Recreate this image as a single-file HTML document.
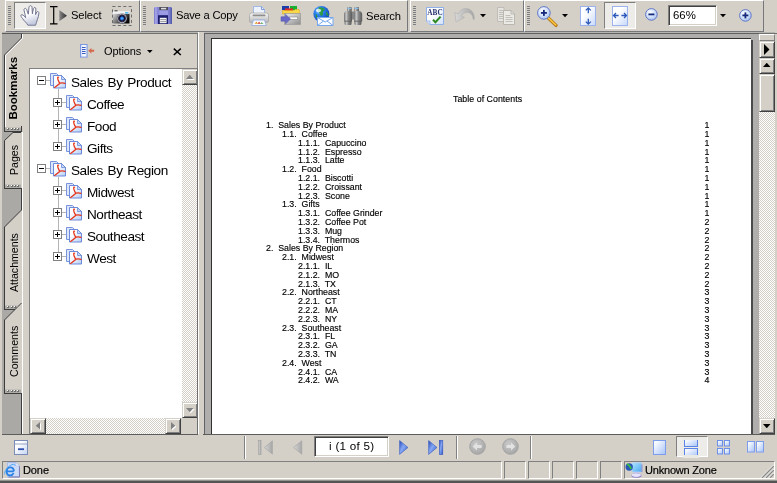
<!DOCTYPE html>
<html><head><meta charset="utf-8"><title>Table of Contents</title>
<style>
*{box-sizing:border-box;margin:0;padding:0}
html,body{width:777px;height:483px;overflow:hidden;background:#d4d0c8;font-family:"Liberation Sans",sans-serif;color:#000}
.a{position:absolute}
.t11{position:absolute;font-size:11px;line-height:13px;white-space:pre;letter-spacing:-0.1px}
.grip{position:absolute;width:3px;height:19px;background:repeating-linear-gradient(#8a8780 0 1px,#e6e3dc 1px 2px)}
.vsep{position:absolute;width:2px;border-left:1px solid #808080;border-right:1px solid #fff}
.pressed{position:absolute;background:#eeece8;border:1px solid;border-color:#808080 #fff #fff #808080}
.btn{position:absolute;background:#d4d0c8;border:1px solid;border-color:#d4d0c8 #404040 #404040 #d4d0c8;box-shadow:inset 1px 1px 0 #fff,inset -1px -1px 0 #808080}
.track{position:absolute;background:repeating-conic-gradient(#fff 0 25%,#d4d0c8 0 50%) 0 0/2px 2px}
svg{position:absolute;overflow:visible}
.toc{position:absolute;font-size:8.8px;line-height:10px;white-space:pre;color:#000;-webkit-text-stroke:0.15px #000}
.tree{position:absolute;font-size:13.6px;line-height:16px;white-space:pre;letter-spacing:-0.45px;word-spacing:1.5px}
.toc,.t11,.tree{will-change:transform}
</style></head><body>
<!-- TOP TOOLBAR -->
<div class="a" style="left:5px;top:0;width:135px;height:32px;border-left:1px solid #fff;border-right:1px solid #75777a;border-top:1px solid #fff;border-bottom:1px solid #75777a"></div>
<div class="a" style="left:140px;top:0;width:268px;height:32px;border-left:1px solid #fff;border-right:1px solid #75777a;border-top:1px solid #fff;border-bottom:1px solid #75777a"></div>
<div class="a" style="left:410px;top:0;width:114px;height:32px;border-left:1px solid #fff;border-right:1px solid #75777a;border-top:1px solid #fff;border-bottom:1px solid #75777a"></div>
<div class="a" style="left:524px;top:0;width:240px;height:32px;border-left:1px solid #fff;border-right:1px solid #75777a;border-top:1px solid #fff;border-bottom:1px solid #75777a"></div>
<svg style="left:8px;top:0" width="4" height="31" shape-rendering="crispEdges"><rect x="0" y="6" width="3" height="1" fill="#7c7e82"/><rect x="0" y="8" width="3" height="1" fill="#7c7e82"/><rect x="0" y="10" width="3" height="1" fill="#7c7e82"/><rect x="0" y="12" width="3" height="1" fill="#7c7e82"/><rect x="0" y="14" width="3" height="1" fill="#7c7e82"/><rect x="0" y="16" width="3" height="1" fill="#7c7e82"/><rect x="0" y="18" width="3" height="1" fill="#7c7e82"/><rect x="0" y="20" width="3" height="1" fill="#7c7e82"/><rect x="0" y="22" width="3" height="1" fill="#7c7e82"/><rect x="0" y="24" width="3" height="1" fill="#7c7e82"/></svg>
<svg style="left:143px;top:0" width="4" height="31" shape-rendering="crispEdges"><rect x="0" y="6" width="3" height="1" fill="#7c7e82"/><rect x="0" y="8" width="3" height="1" fill="#7c7e82"/><rect x="0" y="10" width="3" height="1" fill="#7c7e82"/><rect x="0" y="12" width="3" height="1" fill="#7c7e82"/><rect x="0" y="14" width="3" height="1" fill="#7c7e82"/><rect x="0" y="16" width="3" height="1" fill="#7c7e82"/><rect x="0" y="18" width="3" height="1" fill="#7c7e82"/><rect x="0" y="20" width="3" height="1" fill="#7c7e82"/><rect x="0" y="22" width="3" height="1" fill="#7c7e82"/><rect x="0" y="24" width="3" height="1" fill="#7c7e82"/></svg>
<svg style="left:413px;top:0" width="4" height="31" shape-rendering="crispEdges"><rect x="0" y="6" width="3" height="1" fill="#7c7e82"/><rect x="0" y="8" width="3" height="1" fill="#7c7e82"/><rect x="0" y="10" width="3" height="1" fill="#7c7e82"/><rect x="0" y="12" width="3" height="1" fill="#7c7e82"/><rect x="0" y="14" width="3" height="1" fill="#7c7e82"/><rect x="0" y="16" width="3" height="1" fill="#7c7e82"/><rect x="0" y="18" width="3" height="1" fill="#7c7e82"/><rect x="0" y="20" width="3" height="1" fill="#7c7e82"/><rect x="0" y="22" width="3" height="1" fill="#7c7e82"/><rect x="0" y="24" width="3" height="1" fill="#7c7e82"/></svg>
<svg style="left:527px;top:0" width="4" height="31" shape-rendering="crispEdges"><rect x="0" y="6" width="3" height="1" fill="#7c7e82"/><rect x="0" y="8" width="3" height="1" fill="#7c7e82"/><rect x="0" y="10" width="3" height="1" fill="#7c7e82"/><rect x="0" y="12" width="3" height="1" fill="#7c7e82"/><rect x="0" y="14" width="3" height="1" fill="#7c7e82"/><rect x="0" y="16" width="3" height="1" fill="#7c7e82"/><rect x="0" y="18" width="3" height="1" fill="#7c7e82"/><rect x="0" y="20" width="3" height="1" fill="#7c7e82"/><rect x="0" y="22" width="3" height="1" fill="#7c7e82"/><rect x="0" y="24" width="3" height="1" fill="#7c7e82"/></svg>
<div class="a" style="left:2px;top:32px;width:773px;height:1px;background:#b7b5af"></div>
<div class="a" style="left:2px;top:33px;width:773px;height:1px;background:#5a5c5e"></div>
<div class="pressed" style="left:14px;top:2px;width:32px;height:27px"></div>
<svg style="left:14px;top:2px" width="32" height="28" viewBox="0 0 32 28"><defs><linearGradient id="hg" x1="0" y1="0" x2="0.3" y2="1"><stop offset="0.5" stop-color="#fff"/><stop offset="1" stop-color="#c6cce0"/></linearGradient></defs><path d="M13.9 23.2 C12.5 20.5 10 19 8.6 16.6 C7.4 15 6.4 13.6 7.2 12.9 C8.2 12.2 10 13.6 11.6 15.6 C11.4 13 10.4 10.4 10 8.2 C9.8 6.4 11.6 5.6 12.6 7.4 C13.2 9 13.8 10.6 14.3 12.2 C14.6 9.8 14.7 7.4 15 5.2 C15.3 3.2 17.8 3.2 18 5.2 C18.2 7.4 18.2 9.6 18.4 11.8 C18.8 10 19 8.2 19.4 6.6 C19.9 5 22 5.2 21.9 7 C21.8 8.8 21.6 10.8 21.6 12.6 C22 11.6 22.4 10.6 22.9 10 C23.6 9 25.2 9.6 24.9 11.2 C24.6 13.4 24.2 15.6 23.4 17.6 C22.8 19.6 22 21.2 21.6 23.2Z" fill="url(#hg)" stroke="#70748e" stroke-width="1" stroke-linejoin="round"/></svg>
<svg style="left:50px;top:6px" width="18" height="19" viewBox="0 0 18 19"><path d="M0 0.7H3L3.7 1.3 L4.4 0.7H7.5 M0 17.8H3L3.7 17.2L4.4 17.8H7.5 M3.7 1V17.5" stroke="#000" stroke-width="1.2" fill="none"/><defs><linearGradient id="ag" x1="0" y1="0" x2="1" y2="0"><stop offset="0" stop-color="#8a8a8a"/><stop offset="1" stop-color="#2a2a2a"/></linearGradient></defs><path d="M9.3 4 L17 9.8 L9.3 15.2Z" fill="url(#ag)"/></svg>
<div class="t11" style="left:71px;top:8.5px;font-size:11.2px">Select</div>
<svg style="left:112px;top:6px" width="20" height="20" viewBox="0 0 20 20"><defs><linearGradient id="cg" x1="0" y1="0" x2="1" y2="0.6"><stop offset="0" stop-color="#e8e8e8"/><stop offset="0.35" stop-color="#9a9a9a"/><stop offset="1" stop-color="#050505"/></linearGradient><radialGradient id="lg"><stop offset="0" stop-color="#60b8ff"/><stop offset="0.3" stop-color="#2070e0"/><stop offset="0.48" stop-color="#101030"/><stop offset="0.7" stop-color="#34344a"/><stop offset="0.86" stop-color="#b4b4c4"/><stop offset="1" stop-color="#606070"/></radialGradient></defs><rect x="0.5" y="0.5" width="19" height="19" fill="none" stroke="#6c6c6c" stroke-dasharray="3 2.4"/><path d="M1 7.5 h3 l0.5 -1.5 h3 l0.5 1.5 H17.5 V17.5 H1Z" fill="url(#cg)"/><rect x="1" y="5.2" width="16.5" height="2.6" fill="#f4f4f6"/><rect x="13" y="6" width="3.5" height="1.6" fill="#58b8f0"/><rect x="2.5" y="4.2" width="3" height="1.2" fill="#555"/><circle cx="10" cy="12.4" r="5" fill="url(#lg)"/></svg>
<svg style="left:154px;top:7px" width="18" height="17" viewBox="0 0 18 17"><defs><linearGradient id="fg" x1="0" y1="0" x2="1" y2="0"><stop offset="0" stop-color="#7474c4"/><stop offset="0.1" stop-color="#a8a8ec"/><stop offset="0.2" stop-color="#8686d6"/><stop offset="0.85" stop-color="#7e7ece"/><stop offset="1" stop-color="#4e56a6"/></linearGradient></defs><path d="M1 0 H17 L18 1 V17 H0 V1Z" fill="url(#fg)"/><rect x="5.3" y="3" width="8.7" height="5.4" fill="#9c9ce6"/><rect x="5.3" y="0" width="8.7" height="3.2" fill="#4a4a5a"/><rect x="7" y="0.8" width="5.2" height="1.6" fill="#dcdcdc"/><rect x="4" y="8.2" width="10" height="8.8" fill="#1e1e6e"/><rect x="5.8" y="10.8" width="6.8" height="5.4" fill="#f4f4f4"/><path d="M6.2 12.6h6M6.2 14.6h6" stroke="#909090" stroke-width="0.9"/></svg>
<div class="t11" style="left:176px;top:8.5px;font-size:11.2px;letter-spacing:-0.22px">Save a Copy</div>
<svg style="left:249px;top:6px" width="20" height="20" viewBox="0 0 20 20"><defs><linearGradient id="pr" x1="0" y1="0" x2="0" y2="1"><stop offset="0" stop-color="#fafafa"/><stop offset="1" stop-color="#b4b4b4"/></linearGradient></defs><path d="M4.5 0.5 H12.5 L15.5 3.5 V8 H4.5Z" fill="#eef2fc" stroke="#9db4e4" stroke-width="0.9"/><path d="M12.5 0.5V3.5H15.5" fill="none" stroke="#6f93dc" stroke-width="0.9"/><path d="M2.5 7 H17.5 Q19.5 7 19.5 9.5 V15 Q19.5 16.5 18 16.5 H2 Q0.5 16.5 0.5 15 V9.5 Q0.5 7 2.5 7Z" fill="url(#pr)" stroke="#a8a8a8" stroke-width="0.8"/><rect x="3.5" y="8.6" width="13" height="1.6" rx="0.8" fill="#8e8e8e"/><path d="M4.5 14 H15.5 L17.3 19.5 H2.7Z" fill="#f6f8ff" stroke="#8fa8dc" stroke-width="0.8"/><path d="M5.5 17.8 l2 -2.4 l1.5 2.4z" fill="#e8a020"/><path d="M8.5 17.8 l1.5 -2 l2 2z" fill="#d83a2a"/><path d="M11.5 17.8 l1 -1.6 l2 1.6z" fill="#3aa040"/></svg>
<svg style="left:281px;top:6px" width="20" height="19" viewBox="0 0 20 19"><defs><linearGradient id="og" x1="0" y1="0" x2="1" y2="1"><stop offset="0" stop-color="#f0f0f0"/><stop offset="1" stop-color="#8c8c8c"/></linearGradient></defs><rect x="1" y="0" width="7" height="4" fill="#1c3ea8"/><rect x="9" y="0" width="7" height="4" fill="#18b030"/><rect x="4" y="2.4" width="8" height="3.5" fill="#e02828"/><path d="M1.5 4.5 H13 l1 -1 h4 l0.5 1 V8 H1.5Z" fill="#f8d848" stroke="#e0a818" stroke-width="0.9" stroke-dasharray="1 0.6"/><rect x="3.5" y="7.5" width="16" height="11" fill="url(#og)" stroke="#9a9a9a" stroke-width="0.7"/><rect x="8.5" y="11" width="8" height="2.4" fill="#fff" stroke="#8a8a8a" stroke-width="0.6"/><path d="M0 10.8 H4.5 V8.2 L9.5 13 L4.5 17.8 V15.2 H0Z" fill="#6868c8" stroke="#5050a8" stroke-width="0.5"/></svg>
<svg style="left:313px;top:6px" width="21" height="20" viewBox="0 0 21 20"><defs><radialGradient id="gg" cx="0.35" cy="0.3" r="0.8"><stop offset="0" stop-color="#bfe0ff"/><stop offset="0.3" stop-color="#2e86f0"/><stop offset="1" stop-color="#0c3cb0"/></radialGradient></defs><circle cx="8.4" cy="8" r="8" fill="url(#gg)"/><path d="M6 1.5 C8 1 11 2 12 3.5 C11 5 9.5 5 10 7 C10.5 8.5 9 10.5 7.5 9.5 C6 8.5 7 6.5 5.5 5.5 C4.5 4.5 5 2.5 6 1.5Z M13 5.5 C14.5 6 15.5 8 15.5 10 C14.5 10.5 13 9 13 7.5Z M3 8 C4 9 5 10.5 4.5 12.5 C3 12 2 10 3 8Z" fill="#2c9a38" opacity="0.9"/><ellipse cx="5.5" cy="4.5" rx="2.6" ry="1.8" fill="#fff" opacity="0.75"/><rect x="4.5" y="11.5" width="15.5" height="8" fill="#fafcff" stroke="#78a8ec" stroke-width="1"/><path d="M4.5 11.5 L12.2 16 L20 11.5 M4.5 19.5 L10.5 15 M20 19.5 L14 15" fill="none" stroke="#78a8ec" stroke-width="1"/></svg>
<svg style="left:343px;top:7px" width="20" height="18" viewBox="0 0 20 18"><defs><linearGradient id="bg" x1="0" y1="0" x2="1" y2="0"><stop offset="0" stop-color="#707070"/><stop offset="0.28" stop-color="#c8c8c8"/><stop offset="0.55" stop-color="#8a8a8a"/><stop offset="1" stop-color="#5a5a5a"/></linearGradient></defs><rect x="8.2" y="4.5" width="3.6" height="8" fill="#868686"/><rect x="4" y="0" width="4.7" height="5" rx="1" fill="url(#bg)"/><rect x="11.3" y="0" width="4.7" height="5" rx="1" fill="url(#bg)"/><path d="M1 7.5 Q1 4.6 3.6 4 H8 Q9 4.6 9 7 V14.4 H1Z" fill="url(#bg)"/><path d="M11 7 Q11 4.6 12 4 H16.4 Q19.2 4.6 19.2 7.5 V14.4 H11Z" fill="url(#bg)"/><rect x="1.6" y="14" width="6.9" height="4" rx="1.2" fill="url(#bg)"/><rect x="11.5" y="14" width="6.9" height="4" rx="1.2" fill="url(#bg)"/><path d="M1.4 14.2H8.8M11.2 14.2H18.8" stroke="#5c5c5c" stroke-width="0.8"/><rect x="4.4" y="0.8" width="3.9" height="1.1" fill="#84c4f2"/><rect x="11.7" y="0.8" width="3.9" height="1.1" fill="#84c4f2"/></svg>
<div class="t11" style="left:366px;top:10px;font-size:11.2px;letter-spacing:-0.08px">Search</div>
<svg style="left:426px;top:7px;will-change:transform" width="18" height="18" viewBox="0 0 18 18"><defs><linearGradient id="ab" x1="0" y1="0" x2="1" y2="1"><stop offset="0.4" stop-color="#fff"/><stop offset="1" stop-color="#cfe0f8"/></linearGradient></defs><path d="M0.5 0.5 H17.5 V17.5 H4 L0.5 14Z" fill="url(#ab)" stroke="#8fb0e8" stroke-width="1"/><path d="M0.5 14 H4 V17.5" fill="#dce8fa" stroke="#8fb0e8" stroke-width="0.8"/><text x="1.3" y="8.2" font-family="'Liberation Serif',serif" font-weight="bold" font-size="7.6" fill="#22306e" textLength="15.4" lengthAdjust="spacingAndGlyphs">ABC</text><path d="M7 12.8 L9.4 15.2 L14.6 9.6" fill="none" stroke="#2e8a1e" stroke-width="2"/></svg>
<svg style="left:454px;top:8px" width="21" height="15" viewBox="0 0 21 15"><defs><linearGradient id="ug" x1="0" y1="0" x2="1" y2="0"><stop offset="0" stop-color="#d8d8d8"/><stop offset="1" stop-color="#a4a4a4"/></linearGradient></defs><path d="M0.8 4.5 L2 14 L10.5 9.5 L7.4 7.8 C9.5 4.2 14.5 3.2 17.2 6.2 C18.5 7.8 19 9.2 19 11.2 L20.3 11.2 C20.6 6.5 18.6 2.2 14.2 0.8 C10 -0.3 6 1.8 4.1 5.9Z" fill="url(#ug)" stroke="#b0b0b0" stroke-width="0.6"/></svg>
<svg style="left:480px;top:14px" width="6" height="4"><path d="M0 0H6L3 3.2Z" fill="#000"/></svg>
<svg style="left:497px;top:7px" width="18" height="18" viewBox="0 0 18 18"><path d="M0.5 0.5 H7 V14.5 H0.5Z" fill="#e6e4de" stroke="#bcbab4" stroke-width="0.9"/><path d="M2 3.5h4M2 5.5h4M2 7.5h4M2 9.5h4M2 11.5h4" stroke="#bcbab4" stroke-width="0.9"/><path d="M6.5 3.5 H14 L17.5 7 V17.5 H6.5Z" fill="#eceae4" stroke="#b4b2ac" stroke-width="0.9"/><path d="M14 3.5 V7 H17.5" fill="none" stroke="#b4b2ac" stroke-width="0.9"/><path d="M8.5 8.5h5M8.5 10.5h7M8.5 12.5h7M8.5 14.5h7" stroke="#bcbab4" stroke-width="0.9"/></svg>
<svg style="left:546px;top:16px" width="12" height="11" viewBox="0 0 12 11"><path d="M1.5 1.2 L10 9.4" stroke="#b87818" stroke-width="3.4" stroke-linecap="round"/><path d="M1.8 1.3 L9.8 9" stroke="#f8c840" stroke-width="1.6" stroke-linecap="round"/></svg>
<svg style="left:536.8px;top:5.5px" width="13.8" height="13.8" viewBox="0 0 13.8 13.8"><defs><radialGradient id="z1" cx="0.4" cy="0.35" r="0.7"><stop offset="0" stop-color="#fff"/><stop offset="0.5" stop-color="#d6e4fa"/><stop offset="1" stop-color="#a2bef0"/></radialGradient></defs><circle cx="6.9" cy="6.9" r="6.3" fill="url(#z1)" stroke="#6074c4" stroke-width="1"/><path d="M3.9 6.9H9.9" stroke="#14287c" stroke-width="1.8"/><path d="M6.9 3.9V9.9" stroke="#14287c" stroke-width="1.8"/></svg>
<svg style="left:562px;top:14px" width="6" height="4"><path d="M0 0H6L3 3.2Z" fill="#000"/></svg>
<svg style="left:580px;top:6px" width="16" height="20" viewBox="0 0 16 20"><defs><linearGradient id="fp" x1="0" y1="0" x2="1" y2="1"><stop offset="0.35" stop-color="#fff"/><stop offset="1" stop-color="#c6d8f8"/></linearGradient></defs><rect x="0.5" y="0.5" width="15.0" height="19.0" fill="url(#fp)" stroke="#98b0ee" stroke-width="0.95"/><path d="M8.3 2 V7.2 M5.8 4.4 L8.3 1.9 L10.8 4.4 M8.3 12.8 V18 M5.8 15.6 L8.3 18.1 L10.8 15.6" fill="none" stroke="#2c58b8" stroke-width="1.3"/></svg>
<div class="pressed" style="left:604px;top:2px;width:32px;height:27px"></div>
<svg style="left:612px;top:6px" width="16" height="20" viewBox="0 0 16 20"><defs><linearGradient id="fw" x1="0" y1="0" x2="1" y2="1"><stop offset="0.35" stop-color="#fff"/><stop offset="1" stop-color="#c6d8f8"/></linearGradient></defs><rect x="0.5" y="0.5" width="15.0" height="19.0" fill="url(#fw)" stroke="#98b0ee" stroke-width="0.95"/><path d="M1.6 9.5 H6.6 M4 7 L1.5 9.5 L4 12 M9.4 9.5 H14.4 M12 7 L14.5 9.5 L12 12" fill="none" stroke="#2c58b8" stroke-width="1.3"/></svg>
<svg style="left:645.4px;top:8.0px" width="12.8" height="12.8" viewBox="0 0 12.8 12.8"><defs><radialGradient id="z2" cx="0.4" cy="0.35" r="0.7"><stop offset="0" stop-color="#fff"/><stop offset="0.5" stop-color="#d6e4fa"/><stop offset="1" stop-color="#a2bef0"/></radialGradient></defs><circle cx="6.4" cy="6.4" r="5.8" fill="url(#z2)" stroke="#6074c4" stroke-width="1"/><path d="M3.4 6.4H9.4" stroke="#14287c" stroke-width="1.8"/></svg>
<div class="a" style="left:668px;top:5px;width:49px;height:21px;background:#fff;border:1px solid;border-color:#808080 #fff #fff #808080;box-shadow:inset 1px 1px 0 #404040,inset -1px -1px 0 #d4d0c8"></div>
<div class="t11" style="left:673px;top:8.5px;font-size:11.4px;letter-spacing:0">66%</div>
<svg style="left:720px;top:14px" width="6" height="4"><path d="M0 0H6L3 3.2Z" fill="#000"/></svg>
<svg style="left:739.3px;top:8.5px" width="12.8" height="12.8" viewBox="0 0 12.8 12.8"><defs><radialGradient id="z3" cx="0.4" cy="0.35" r="0.7"><stop offset="0" stop-color="#fff"/><stop offset="0.5" stop-color="#d6e4fa"/><stop offset="1" stop-color="#a2bef0"/></radialGradient></defs><circle cx="6.4" cy="6.4" r="5.8" fill="url(#z3)" stroke="#6074c4" stroke-width="1"/><path d="M3.4 6.4H9.4" stroke="#14287c" stroke-width="1.8"/><path d="M6.4 3.4V9.4" stroke="#14287c" stroke-width="1.8"/></svg>
<!-- NAV PANEL -->
<svg width="0" height="0" style="left:0;top:0"><defs><linearGradient id="pg" x1="0" y1="0" x2="1" y2="1"><stop offset="0.3" stop-color="#fff"/><stop offset="1" stop-color="#b4ccf4"/></linearGradient></defs></svg>
<div class="a" style="left:23px;top:33px;width:175px;height:401px;background:#d4d0c8;border-top:1px solid #707070;border-right:1px solid #808080"></div>
<div class="a" style="left:198px;top:32px;width:6px;height:403px;background:#d4d0c8;border-left:1px solid #fff"></div>
<svg style="left:80px;top:44px" width="15" height="14" viewBox="0 0 15 14"><defs><linearGradient id="oi" x1="0" y1="0" x2="1" y2="0"><stop offset="0" stop-color="#c8d6f8"/><stop offset="0.5" stop-color="#fff"/><stop offset="1" stop-color="#dce6fa"/></linearGradient></defs><rect x="0.5" y="0.5" width="6.6" height="12.6" fill="url(#oi)" stroke="#7c98e0"/><path d="M2 3.5h3.6M2 5.5h3.6M2 7.5h3.6M2 9.5h3.6" stroke="#3a5cc0" stroke-width="1"/><path d="M8.2 6.7 L11.4 4 V5.7 H14.2 V7.7 H11.4 V9.4z" fill="#d4684a"/></svg>
<div class="t11" style="left:104px;top:45px;letter-spacing:-0.1px">Options</div>
<svg style="left:147px;top:50px" width="6" height="4"><path d="M0 0h5.6L2.8 3z" fill="#000"/></svg>
<svg style="left:173px;top:48px" width="9" height="8" viewBox="0 0 9 8"><path d="M0.8 0.6 L7.8 7 M7.8 0.6 L0.8 7" stroke="#000" stroke-width="1.45"/></svg>
<div class="a" style="left:29px;top:68px;width:169px;height:366px;background:#fff;border-left:1px solid #808080;border-top:1px solid #808080"></div>
<div class="a" style="left:58px;top:89px;width:1px;height:59px;background:#b4b4b4"></div>
<div class="a" style="left:58px;top:177px;width:1px;height:81px;background:#b4b4b4"></div>
<div class="a" style="left:46px;top:80px;width:4px;height:1px;background:#b4b4b4"></div>
<div class="a" style="left:37px;top:76px;width:9px;height:9px;border:1px solid #808080;background:#fff"></div><div class="a" style="left:39px;top:80px;width:5px;height:1px;background:#000"></div>
<svg style="left:50px;top:72px" width="16" height="17" viewBox="0 0 16 17"><path d="M0.5 1.5h6l2 2v10h-8z" fill="#dce6fa" stroke="#6c88d8" stroke-width="0.9"/><path d="M3.5 3.5h8l4 4v8.5h-12z" fill="url(#pg)" stroke="#5f7fd6" stroke-width="0.9"/><path d="M11.5 3.5v4h4z" fill="#c4d6f6" stroke="#5f7fd6" stroke-width="0.7"/><path d="M8.6 5.2 C7.6 4.6 7.4 6.2 8.2 8.2 C8.8 9.8 9.4 10.6 9.9 11.2 C8.6 12.4 7 13.8 4.6 15.4 M9.9 11.2 C11.2 10.9 13.2 10.8 15 11.4" fill="none" stroke="#e63419" stroke-width="1.25" stroke-linecap="round"/></svg>
<div class="tree" style="left:71px;top:75px">Sales By Product</div>
<div class="a" style="left:62px;top:102px;width:4px;height:1px;background:#b4b4b4"></div>
<div class="a" style="left:53px;top:98px;width:9px;height:9px;border:1px solid #808080;background:#fff"></div><div class="a" style="left:55px;top:102px;width:5px;height:1px;background:#000"></div><div class="a" style="left:57px;top:100px;width:1px;height:5px;background:#000"></div>
<svg style="left:66px;top:94px" width="16" height="17" viewBox="0 0 16 17"><path d="M0.5 1.5h6l2 2v10h-8z" fill="#dce6fa" stroke="#6c88d8" stroke-width="0.9"/><path d="M3.5 3.5h8l4 4v8.5h-12z" fill="url(#pg)" stroke="#5f7fd6" stroke-width="0.9"/><path d="M11.5 3.5v4h4z" fill="#c4d6f6" stroke="#5f7fd6" stroke-width="0.7"/><path d="M8.6 5.2 C7.6 4.6 7.4 6.2 8.2 8.2 C8.8 9.8 9.4 10.6 9.9 11.2 C8.6 12.4 7 13.8 4.6 15.4 M9.9 11.2 C11.2 10.9 13.2 10.8 15 11.4" fill="none" stroke="#e63419" stroke-width="1.25" stroke-linecap="round"/></svg>
<div class="tree" style="left:87px;top:97px">Coffee</div>
<div class="a" style="left:62px;top:124px;width:4px;height:1px;background:#b4b4b4"></div>
<div class="a" style="left:53px;top:120px;width:9px;height:9px;border:1px solid #808080;background:#fff"></div><div class="a" style="left:55px;top:124px;width:5px;height:1px;background:#000"></div><div class="a" style="left:57px;top:122px;width:1px;height:5px;background:#000"></div>
<svg style="left:66px;top:116px" width="16" height="17" viewBox="0 0 16 17"><path d="M0.5 1.5h6l2 2v10h-8z" fill="#dce6fa" stroke="#6c88d8" stroke-width="0.9"/><path d="M3.5 3.5h8l4 4v8.5h-12z" fill="url(#pg)" stroke="#5f7fd6" stroke-width="0.9"/><path d="M11.5 3.5v4h4z" fill="#c4d6f6" stroke="#5f7fd6" stroke-width="0.7"/><path d="M8.6 5.2 C7.6 4.6 7.4 6.2 8.2 8.2 C8.8 9.8 9.4 10.6 9.9 11.2 C8.6 12.4 7 13.8 4.6 15.4 M9.9 11.2 C11.2 10.9 13.2 10.8 15 11.4" fill="none" stroke="#e63419" stroke-width="1.25" stroke-linecap="round"/></svg>
<div class="tree" style="left:87px;top:119px">Food</div>
<div class="a" style="left:62px;top:146px;width:4px;height:1px;background:#b4b4b4"></div>
<div class="a" style="left:53px;top:142px;width:9px;height:9px;border:1px solid #808080;background:#fff"></div><div class="a" style="left:55px;top:146px;width:5px;height:1px;background:#000"></div><div class="a" style="left:57px;top:144px;width:1px;height:5px;background:#000"></div>
<svg style="left:66px;top:138px" width="16" height="17" viewBox="0 0 16 17"><path d="M0.5 1.5h6l2 2v10h-8z" fill="#dce6fa" stroke="#6c88d8" stroke-width="0.9"/><path d="M3.5 3.5h8l4 4v8.5h-12z" fill="url(#pg)" stroke="#5f7fd6" stroke-width="0.9"/><path d="M11.5 3.5v4h4z" fill="#c4d6f6" stroke="#5f7fd6" stroke-width="0.7"/><path d="M8.6 5.2 C7.6 4.6 7.4 6.2 8.2 8.2 C8.8 9.8 9.4 10.6 9.9 11.2 C8.6 12.4 7 13.8 4.6 15.4 M9.9 11.2 C11.2 10.9 13.2 10.8 15 11.4" fill="none" stroke="#e63419" stroke-width="1.25" stroke-linecap="round"/></svg>
<div class="tree" style="left:87px;top:141px">Gifts</div>
<div class="a" style="left:46px;top:168px;width:4px;height:1px;background:#b4b4b4"></div>
<div class="a" style="left:37px;top:164px;width:9px;height:9px;border:1px solid #808080;background:#fff"></div><div class="a" style="left:39px;top:168px;width:5px;height:1px;background:#000"></div>
<svg style="left:50px;top:160px" width="16" height="17" viewBox="0 0 16 17"><path d="M0.5 1.5h6l2 2v10h-8z" fill="#dce6fa" stroke="#6c88d8" stroke-width="0.9"/><path d="M3.5 3.5h8l4 4v8.5h-12z" fill="url(#pg)" stroke="#5f7fd6" stroke-width="0.9"/><path d="M11.5 3.5v4h4z" fill="#c4d6f6" stroke="#5f7fd6" stroke-width="0.7"/><path d="M8.6 5.2 C7.6 4.6 7.4 6.2 8.2 8.2 C8.8 9.8 9.4 10.6 9.9 11.2 C8.6 12.4 7 13.8 4.6 15.4 M9.9 11.2 C11.2 10.9 13.2 10.8 15 11.4" fill="none" stroke="#e63419" stroke-width="1.25" stroke-linecap="round"/></svg>
<div class="tree" style="left:71px;top:163px">Sales By Region</div>
<div class="a" style="left:62px;top:190px;width:4px;height:1px;background:#b4b4b4"></div>
<div class="a" style="left:53px;top:186px;width:9px;height:9px;border:1px solid #808080;background:#fff"></div><div class="a" style="left:55px;top:190px;width:5px;height:1px;background:#000"></div><div class="a" style="left:57px;top:188px;width:1px;height:5px;background:#000"></div>
<svg style="left:66px;top:182px" width="16" height="17" viewBox="0 0 16 17"><path d="M0.5 1.5h6l2 2v10h-8z" fill="#dce6fa" stroke="#6c88d8" stroke-width="0.9"/><path d="M3.5 3.5h8l4 4v8.5h-12z" fill="url(#pg)" stroke="#5f7fd6" stroke-width="0.9"/><path d="M11.5 3.5v4h4z" fill="#c4d6f6" stroke="#5f7fd6" stroke-width="0.7"/><path d="M8.6 5.2 C7.6 4.6 7.4 6.2 8.2 8.2 C8.8 9.8 9.4 10.6 9.9 11.2 C8.6 12.4 7 13.8 4.6 15.4 M9.9 11.2 C11.2 10.9 13.2 10.8 15 11.4" fill="none" stroke="#e63419" stroke-width="1.25" stroke-linecap="round"/></svg>
<div class="tree" style="left:87px;top:185px">Midwest</div>
<div class="a" style="left:62px;top:212px;width:4px;height:1px;background:#b4b4b4"></div>
<div class="a" style="left:53px;top:208px;width:9px;height:9px;border:1px solid #808080;background:#fff"></div><div class="a" style="left:55px;top:212px;width:5px;height:1px;background:#000"></div><div class="a" style="left:57px;top:210px;width:1px;height:5px;background:#000"></div>
<svg style="left:66px;top:204px" width="16" height="17" viewBox="0 0 16 17"><path d="M0.5 1.5h6l2 2v10h-8z" fill="#dce6fa" stroke="#6c88d8" stroke-width="0.9"/><path d="M3.5 3.5h8l4 4v8.5h-12z" fill="url(#pg)" stroke="#5f7fd6" stroke-width="0.9"/><path d="M11.5 3.5v4h4z" fill="#c4d6f6" stroke="#5f7fd6" stroke-width="0.7"/><path d="M8.6 5.2 C7.6 4.6 7.4 6.2 8.2 8.2 C8.8 9.8 9.4 10.6 9.9 11.2 C8.6 12.4 7 13.8 4.6 15.4 M9.9 11.2 C11.2 10.9 13.2 10.8 15 11.4" fill="none" stroke="#e63419" stroke-width="1.25" stroke-linecap="round"/></svg>
<div class="tree" style="left:87px;top:207px">Northeast</div>
<div class="a" style="left:62px;top:234px;width:4px;height:1px;background:#b4b4b4"></div>
<div class="a" style="left:53px;top:230px;width:9px;height:9px;border:1px solid #808080;background:#fff"></div><div class="a" style="left:55px;top:234px;width:5px;height:1px;background:#000"></div><div class="a" style="left:57px;top:232px;width:1px;height:5px;background:#000"></div>
<svg style="left:66px;top:226px" width="16" height="17" viewBox="0 0 16 17"><path d="M0.5 1.5h6l2 2v10h-8z" fill="#dce6fa" stroke="#6c88d8" stroke-width="0.9"/><path d="M3.5 3.5h8l4 4v8.5h-12z" fill="url(#pg)" stroke="#5f7fd6" stroke-width="0.9"/><path d="M11.5 3.5v4h4z" fill="#c4d6f6" stroke="#5f7fd6" stroke-width="0.7"/><path d="M8.6 5.2 C7.6 4.6 7.4 6.2 8.2 8.2 C8.8 9.8 9.4 10.6 9.9 11.2 C8.6 12.4 7 13.8 4.6 15.4 M9.9 11.2 C11.2 10.9 13.2 10.8 15 11.4" fill="none" stroke="#e63419" stroke-width="1.25" stroke-linecap="round"/></svg>
<div class="tree" style="left:87px;top:229px">Southeast</div>
<div class="a" style="left:62px;top:256px;width:4px;height:1px;background:#b4b4b4"></div>
<div class="a" style="left:53px;top:252px;width:9px;height:9px;border:1px solid #808080;background:#fff"></div><div class="a" style="left:55px;top:256px;width:5px;height:1px;background:#000"></div><div class="a" style="left:57px;top:254px;width:1px;height:5px;background:#000"></div>
<svg style="left:66px;top:248px" width="16" height="17" viewBox="0 0 16 17"><path d="M0.5 1.5h6l2 2v10h-8z" fill="#dce6fa" stroke="#6c88d8" stroke-width="0.9"/><path d="M3.5 3.5h8l4 4v8.5h-12z" fill="url(#pg)" stroke="#5f7fd6" stroke-width="0.9"/><path d="M11.5 3.5v4h4z" fill="#c4d6f6" stroke="#5f7fd6" stroke-width="0.7"/><path d="M8.6 5.2 C7.6 4.6 7.4 6.2 8.2 8.2 C8.8 9.8 9.4 10.6 9.9 11.2 C8.6 12.4 7 13.8 4.6 15.4 M9.9 11.2 C11.2 10.9 13.2 10.8 15 11.4" fill="none" stroke="#e63419" stroke-width="1.25" stroke-linecap="round"/></svg>
<div class="tree" style="left:87px;top:251px">West</div>
<div class="track" style="left:182px;top:69px;width:16px;height:349px"></div>
<div class="btn" style="left:182px;top:69px;width:16px;height:16px"></div>
<svg style="left:186px;top:75px" width="8" height="4"><path d="M0 4 L3.5 0 L4 0 L7.5 4Z" fill="#fff" transform="translate(1,1)"/><path d="M0 4 L3.5 0 L4 0 L7.5 4Z" fill="#808080"/></svg>
<div class="btn" style="left:182px;top:402px;width:16px;height:16px"></div>
<svg style="left:186px;top:408px" width="8" height="4"><path d="M0 0 L7.5 0 L4 4 L3.5 4Z" fill="#fff" transform="translate(1,1)"/><path d="M0 0 L7.5 0 L4 4 L3.5 4Z" fill="#808080"/></svg>
<div class="track" style="left:30px;top:418px;width:152px;height:16px"></div>
<div class="btn" style="left:30px;top:418px;width:16px;height:16px"></div>
<svg style="left:36px;top:422px" width="4" height="8"><path d="M4 0 L4 7.5 L0 4 L0 3.5Z" fill="#fff" transform="translate(1,1)"/><path d="M4 0 L4 7.5 L0 4 L0 3.5Z" fill="#808080"/></svg>
<div class="btn" style="left:165px;top:418px;width:16px;height:16px"></div>
<svg style="left:171px;top:422px" width="4" height="8"><path d="M0 0 L0 7.5 L4 4 L4 3.5Z" fill="#fff" transform="translate(1,1)"/><path d="M0 0 L0 7.5 L4 4 L4 3.5Z" fill="#808080"/></svg>
<div class="a" style="left:181px;top:418px;width:17px;height:16px;background:#d4d0c8"></div>
<div class="a" style="left:197px;top:68px;width:1px;height:366px;background:#6e6e6e"></div>
<!-- LEFT TABS -->
<svg style="left:0;top:0;will-change:transform" width="30" height="483" viewBox="0 0 30 483" shape-rendering="crispEdges"><rect x="2" y="34" width="20" height="400" fill="#aba9a6"/><rect x="21" y="126" width="1" height="308" fill="#3c3c3c"/><rect x="22" y="132" width="1" height="302" fill="#fff"/><path d="M21.5 132 H13 L4.5 140.5 V189 H21.5 Z" fill="#d4d0c8"/><path d="M21 132.5 H13 L4.5 140.5 V189" fill="none" stroke="#3c3c3c" shape-rendering="auto"/><rect x="5" y="184" width="16" height="4" fill="#aeaca6"/><rect x="5" y="184" width="16" height="1" fill="#c4c1ba"/><rect x="7" y="185" width="2" height="2" fill="#6e6e6e"/><rect x="7" y="185" width="1" height="1" fill="#fff"/><rect x="11" y="185" width="2" height="2" fill="#6e6e6e"/><rect x="11" y="185" width="1" height="1" fill="#fff"/><rect x="14" y="185" width="2" height="2" fill="#6e6e6e"/><rect x="14" y="185" width="1" height="1" fill="#fff"/><rect x="17" y="185" width="2" height="2" fill="#6e6e6e"/><rect x="17" y="185" width="1" height="1" fill="#fff"/><rect x="4" y="188" width="18" height="1" fill="#3c3c3c"/><path d="M21.5 210 L4.5 227 V310 H21.5Z" fill="#d4d0c8"/><path d="M21.5 210 L4.5 227 V310" fill="none" stroke="#3c3c3c" shape-rendering="auto"/><rect x="5" y="305" width="16" height="4" fill="#aeaca6"/><rect x="5" y="305" width="16" height="1" fill="#c4c1ba"/><rect x="7" y="306" width="2" height="2" fill="#6e6e6e"/><rect x="7" y="306" width="1" height="1" fill="#fff"/><rect x="11" y="306" width="2" height="2" fill="#6e6e6e"/><rect x="11" y="306" width="1" height="1" fill="#fff"/><rect x="14" y="306" width="2" height="2" fill="#6e6e6e"/><rect x="14" y="306" width="1" height="1" fill="#fff"/><rect x="17" y="306" width="2" height="2" fill="#6e6e6e"/><rect x="17" y="306" width="1" height="1" fill="#fff"/><rect x="4" y="309" width="18" height="1" fill="#3c3c3c"/><path d="M21.5 303 L4.5 320 V394 H21.5Z" fill="#d4d0c8"/><path d="M21.5 303 L4.5 320 V394" fill="none" stroke="#3c3c3c" shape-rendering="auto"/><rect x="5" y="389" width="16" height="4" fill="#aeaca6"/><rect x="5" y="389" width="16" height="1" fill="#c4c1ba"/><rect x="7" y="390" width="2" height="2" fill="#6e6e6e"/><rect x="7" y="390" width="1" height="1" fill="#fff"/><rect x="11" y="390" width="2" height="2" fill="#6e6e6e"/><rect x="11" y="390" width="1" height="1" fill="#fff"/><rect x="14" y="390" width="2" height="2" fill="#6e6e6e"/><rect x="14" y="390" width="1" height="1" fill="#fff"/><rect x="17" y="390" width="2" height="2" fill="#6e6e6e"/><rect x="17" y="390" width="1" height="1" fill="#fff"/><rect x="4" y="393" width="18" height="1" fill="#3c3c3c"/><path d="M23 34 H21.5 V38 L4.5 55 V132 H23Z" fill="#d4d0c8"/><path d="M21.5 34 V38 L4.5 55 V131" fill="none" stroke="#3c3c3c" shape-rendering="auto"/><path d="M22.5 34 V38.4 L5.5 55.4 V131" fill="none" stroke="#fff" shape-rendering="auto"/><rect x="5" y="127" width="16" height="4" fill="#aeaca6"/><rect x="5" y="127" width="16" height="1" fill="#c4c1ba"/><rect x="7" y="128" width="2" height="2" fill="#6e6e6e"/><rect x="7" y="128" width="1" height="1" fill="#fff"/><rect x="11" y="128" width="2" height="2" fill="#6e6e6e"/><rect x="11" y="128" width="1" height="1" fill="#fff"/><rect x="14" y="128" width="2" height="2" fill="#6e6e6e"/><rect x="14" y="128" width="1" height="1" fill="#fff"/><rect x="17" y="128" width="2" height="2" fill="#6e6e6e"/><rect x="17" y="128" width="1" height="1" fill="#fff"/><rect x="4" y="131" width="18" height="1" fill="#3c3c3c"/><rect x="21" y="126" width="1" height="6" fill="#3c3c3c"/><g font-family="'Liberation Sans',sans-serif" font-size="10.6" fill="#000" shape-rendering="auto"><text transform="translate(17,119.5) rotate(-90)" font-weight="bold" font-size="11.5">Bookmarks</text><text transform="translate(17.5,175) rotate(-90)">Pages</text><text transform="translate(17.5,292) rotate(-90)">Attachments</text><text transform="translate(17.5,377) rotate(-90)">Comments</text></g></svg>
<!-- DOCUMENT -->
<div class="a" style="left:204px;top:33px;width:555px;height:401px;background:#b0aeac;border-top:1px solid #5e6264;border-left:1px solid #5e6264"></div>
<div class="a" style="left:211px;top:38px;width:540px;height:396px;background:#fff;border-left:1px solid #303030;border-top:1px solid #303030"></div>
<div class="a" style="left:751px;top:40px;width:2px;height:394px;background:#4a4a4a"></div>
<div class="toc" style="left:453px;letter-spacing:0.04px;top:93.5px">Table of Contents</div>
<div class="toc" style="left:266.0px;top:120.1px">1.  Sales By Product</div>
<div class="toc" style="left:690px;width:19.5px;text-align:right;top:120.1px">1</div>
<div class="toc" style="left:282.0px;top:128.9px">1.1.  Coffee</div>
<div class="toc" style="left:690px;width:19.5px;text-align:right;top:128.9px">1</div>
<div class="toc" style="left:298.0px;top:137.7px">1.1.1.  Capuccino</div>
<div class="toc" style="left:690px;width:19.5px;text-align:right;top:137.7px">1</div>
<div class="toc" style="left:298.0px;top:146.5px">1.1.2.  Espresso</div>
<div class="toc" style="left:690px;width:19.5px;text-align:right;top:146.5px">1</div>
<div class="toc" style="left:298.0px;top:155.3px">1.1.3.  Latte</div>
<div class="toc" style="left:690px;width:19.5px;text-align:right;top:155.3px">1</div>
<div class="toc" style="left:282.0px;top:164.1px">1.2.  Food</div>
<div class="toc" style="left:690px;width:19.5px;text-align:right;top:164.1px">1</div>
<div class="toc" style="left:298.0px;top:172.9px">1.2.1.  Biscotti</div>
<div class="toc" style="left:690px;width:19.5px;text-align:right;top:172.9px">1</div>
<div class="toc" style="left:298.0px;top:181.8px">1.2.2.  Croissant</div>
<div class="toc" style="left:690px;width:19.5px;text-align:right;top:181.8px">1</div>
<div class="toc" style="left:298.0px;top:190.5px">1.2.3.  Scone</div>
<div class="toc" style="left:690px;width:19.5px;text-align:right;top:190.5px">1</div>
<div class="toc" style="left:282.0px;top:199.3px">1.3.  Gifts</div>
<div class="toc" style="left:690px;width:19.5px;text-align:right;top:199.3px">1</div>
<div class="toc" style="left:298.0px;top:208.1px">1.3.1.  Coffee Grinder</div>
<div class="toc" style="left:690px;width:19.5px;text-align:right;top:208.1px">1</div>
<div class="toc" style="left:298.0px;top:216.9px">1.3.2.  Coffee Pot</div>
<div class="toc" style="left:690px;width:19.5px;text-align:right;top:216.9px">2</div>
<div class="toc" style="left:298.0px;top:225.8px">1.3.3.  Mug</div>
<div class="toc" style="left:690px;width:19.5px;text-align:right;top:225.8px">2</div>
<div class="toc" style="left:298.0px;top:234.5px">1.3.4.  Thermos</div>
<div class="toc" style="left:690px;width:19.5px;text-align:right;top:234.5px">2</div>
<div class="toc" style="left:266.0px;top:243.3px">2.  Sales By Region</div>
<div class="toc" style="left:690px;width:19.5px;text-align:right;top:243.3px">2</div>
<div class="toc" style="left:282.0px;top:252.1px">2.1.  Midwest</div>
<div class="toc" style="left:690px;width:19.5px;text-align:right;top:252.1px">2</div>
<div class="toc" style="left:298.0px;top:260.9px">2.1.1.  IL</div>
<div class="toc" style="left:690px;width:19.5px;text-align:right;top:260.9px">2</div>
<div class="toc" style="left:298.0px;top:269.8px">2.1.2.  MO</div>
<div class="toc" style="left:690px;width:19.5px;text-align:right;top:269.8px">2</div>
<div class="toc" style="left:298.0px;top:278.6px">2.1.3.  TX</div>
<div class="toc" style="left:690px;width:19.5px;text-align:right;top:278.6px">2</div>
<div class="toc" style="left:282.0px;top:287.3px">2.2.  Northeast</div>
<div class="toc" style="left:690px;width:19.5px;text-align:right;top:287.3px">3</div>
<div class="toc" style="left:298.0px;top:296.1px">2.2.1.  CT</div>
<div class="toc" style="left:690px;width:19.5px;text-align:right;top:296.1px">3</div>
<div class="toc" style="left:298.0px;top:304.9px">2.2.2.  MA</div>
<div class="toc" style="left:690px;width:19.5px;text-align:right;top:304.9px">3</div>
<div class="toc" style="left:298.0px;top:313.8px">2.2.3.  NY</div>
<div class="toc" style="left:690px;width:19.5px;text-align:right;top:313.8px">3</div>
<div class="toc" style="left:282.0px;top:322.6px">2.3.  Southeast</div>
<div class="toc" style="left:690px;width:19.5px;text-align:right;top:322.6px">3</div>
<div class="toc" style="left:298.0px;top:331.3px">2.3.1.  FL</div>
<div class="toc" style="left:690px;width:19.5px;text-align:right;top:331.3px">3</div>
<div class="toc" style="left:298.0px;top:340.2px">2.3.2.  GA</div>
<div class="toc" style="left:690px;width:19.5px;text-align:right;top:340.2px">3</div>
<div class="toc" style="left:298.0px;top:348.9px">2.3.3.  TN</div>
<div class="toc" style="left:690px;width:19.5px;text-align:right;top:348.9px">3</div>
<div class="toc" style="left:282.0px;top:357.8px">2.4.  West</div>
<div class="toc" style="left:690px;width:19.5px;text-align:right;top:357.8px">3</div>
<div class="toc" style="left:298.0px;top:366.6px">2.4.1.  CA</div>
<div class="toc" style="left:690px;width:19.5px;text-align:right;top:366.6px">3</div>
<div class="toc" style="left:298.0px;top:375.3px">2.4.2.  WA</div>
<div class="toc" style="left:690px;width:19.5px;text-align:right;top:375.3px">4</div>
<!-- doc scrollbar -->
<div class="a" style="left:759px;top:33px;width:18px;height:401px;background:#d4d0c8;border-top:1px solid #707070"></div>
<div class="track" style="left:759px;top:41px;width:16px;height:393px"></div>
<div class="a" style="left:759px;top:34px;width:16px;height:7px;background:#d4d0c8;border:1px solid;border-color:#fff #808080 #808080 #fff"></div>
<div class="btn" style="left:759px;top:41px;width:16px;height:17px"></div>
<svg style="left:764px;top:44px" width="6" height="11"><path d="M0 0 L5.5 5.5 L0 11Z" fill="#000"/></svg>
<div class="btn" style="left:759px;top:58px;width:16px;height:16px"></div>
<svg style="left:763px;top:63px" width="8" height="4"><path d="M0 4 L3.5 0 L4 0 L7.5 4Z" fill="#000"/></svg>
<div class="btn" style="left:759px;top:74px;width:16px;height:38px"></div>
<div class="btn" style="left:759px;top:418px;width:16px;height:16px"></div>
<svg style="left:763px;top:424px" width="8" height="4"><path d="M0 0 L7.5 0 L4 4 L3.5 4Z" fill="#000"/></svg>
<!-- BOTTOM TOOLBAR -->
<div class="a" style="left:0;top:434px;width:777px;height:27px;background:#d4d0c8;border-top:1px solid #d4d0c8"></div>
<div class="a" style="left:2px;top:434px;width:196px;height:1px;background:#5c5c5c"></div>
<div class="a" style="left:203px;top:434px;width:572px;height:1px;background:#5c5c5c"></div>
<svg style="left:14px;top:440px" width="14" height="15" viewBox="0 0 14 15"><defs><linearGradient id="wi" x1="0" y1="0" x2="1" y2="1"><stop offset="0.3" stop-color="#fff"/><stop offset="1" stop-color="#c4d4f4"/></linearGradient></defs><rect x="0.5" y="0.5" width="13" height="14" fill="url(#wi)" stroke="#7c8cb8" stroke-width="1"/><path d="M0.5 4H13.5" stroke="#8c98bc" stroke-width="0.9"/><path d="M4 9.2H10" stroke="#3050b0" stroke-width="1.8"/></svg>
<div class="a" style="left:244px;top:436px;width:2px;height:23px;border-left:1px solid #808080;border-right:1px solid #fff"></div>
<svg style="left:258px;top:440px" width="15" height="15" viewBox="0 0 15 15"><defs><linearGradient id="g1" x1="0" y1="0" x2="1" y2="0"><stop offset="0" stop-color="#d6d6d6"/><stop offset="1" stop-color="#a6a6a6"/></linearGradient></defs><rect x="0.4" y="0.4" width="2.6" height="14.2" fill="url(#g1)" stroke="#a4a4a4" stroke-width="0.7"/><path d="M14.4 0.8 V14.2 L6.4 7.5Z" fill="url(#g1)" stroke="#a8a8a8" stroke-width="0.7"/></svg>
<svg style="left:293px;top:440px" width="10" height="15" viewBox="0 0 10 15"><defs><linearGradient id="g2" x1="0" y1="0" x2="1" y2="0"><stop offset="0" stop-color="#d6d6d6"/><stop offset="1" stop-color="#a6a6a6"/></linearGradient></defs><path d="M8.8 0.8 V14.2 L0.6 7.5Z" fill="url(#g2)" stroke="#a8a8a8" stroke-width="0.7"/></svg>
<div class="a" style="left:314px;top:436px;width:75px;height:21px;background:#fff;border:1px solid;border-color:#808080 #fff #fff #808080;box-shadow:inset 1px 1px 0 #404040,inset -1px -1px 0 #d4d0c8"></div>
<div class="t11" style="left:329px;top:439px;font-size:11.6px;letter-spacing:0.3px">i (1 of 5)</div>
<svg style="left:399px;top:440px" width="10" height="15" viewBox="0 0 10 15"><defs><linearGradient id="b1" x1="0" y1="0" x2="1" y2="1"><stop offset="0" stop-color="#2348b8"/><stop offset="0.45" stop-color="#86a8f4"/><stop offset="1" stop-color="#2a54c4"/></linearGradient></defs><path d="M0.6 0.6 V14.4 L9 7.5Z" fill="url(#b1)" stroke="#3c5cc0" stroke-width="0.6"/></svg>
<svg style="left:428px;top:440px" width="16" height="15" viewBox="0 0 16 15"><defs><linearGradient id="b2" x1="0" y1="0" x2="1" y2="1"><stop offset="0" stop-color="#2348b8"/><stop offset="0.45" stop-color="#86a8f4"/><stop offset="1" stop-color="#2a54c4"/></linearGradient></defs><path d="M0.6 0.6 V14.4 L9 7.5Z" fill="url(#b2)" stroke="#3c5cc0" stroke-width="0.6"/><rect x="11.4" y="0.4" width="3.4" height="14.2" fill="url(#b2)" stroke="#3454c0" stroke-width="0.6"/></svg>
<div class="a" style="left:456px;top:436px;width:2px;height:23px;border-left:1px solid #808080;border-right:1px solid #fff"></div>
<svg style="left:469.4px;top:438.3px" width="17" height="17" viewBox="0 0 17 17"><defs><radialGradient id="n1" cx="0.4" cy="0.35" r="0.75"><stop offset="0" stop-color="#cacaca"/><stop offset="1" stop-color="#a2a2a2"/></radialGradient></defs><circle cx="8.5" cy="8.5" r="7.8" fill="url(#n1)" stroke="#a0a0a0" stroke-width="0.9"/><path d="M3.6 8.5 L8 4.6 V7 H12.6 V10 H8 V12.4Z" fill="#e2e2e2"/></svg>
<svg style="left:501.5px;top:438.3px" width="17" height="17" viewBox="0 0 17 17"><defs><radialGradient id="n2" cx="0.4" cy="0.35" r="0.75"><stop offset="0" stop-color="#cacaca"/><stop offset="1" stop-color="#a2a2a2"/></radialGradient></defs><circle cx="8.5" cy="8.5" r="7.8" fill="url(#n2)" stroke="#a0a0a0" stroke-width="0.9"/><path d="M13.4 8.5 L9 4.6 V7 H4.4 V10 H9 V12.4Z" fill="#e2e2e2"/></svg>
<div class="a" style="left:530px;top:436px;width:2px;height:23px;border-left:1px solid #808080;border-right:1px solid #fff"></div>
<svg style="left:653px;top:440px" width="13" height="15" viewBox="0 0 13 15"><defs><linearGradient id="s1" x1="0" y1="0" x2="1" y2="1"><stop offset="0.2" stop-color="#f6f9ff"/><stop offset="1" stop-color="#a6c2f6"/></linearGradient></defs><rect x="0.5" y="0.5" width="12" height="14" fill="url(#s1)" stroke="#7c9cec" stroke-width="1"/></svg>
<div class="pressed" style="left:676px;top:436px;width:32px;height:21px"></div>
<svg style="left:684px;top:440px" width="14" height="15" viewBox="0 0 14 15"><defs><linearGradient id="s2" x1="0" y1="0" x2="1" y2="1"><stop offset="0.2" stop-color="#f6f9ff"/><stop offset="1" stop-color="#a6c2f6"/></linearGradient></defs><rect x="0.5" y="-1" width="13" height="7.5" fill="url(#s2)" stroke="#5c84e4" stroke-width="1"/><rect x="0.5" y="8.5" width="13" height="8" fill="url(#s2)" stroke="#5c84e4" stroke-width="1"/><rect x="-1" y="-3" width="16" height="3" fill="#ebe9e4"/><rect x="-1" y="15" width="16" height="3" fill="#ebe9e4"/></svg>
<svg style="left:717px;top:440px" width="14" height="15" viewBox="0 0 14 15"><defs><linearGradient id="s3" x1="0" y1="0" x2="1" y2="1"><stop offset="0.2" stop-color="#f6f9ff"/><stop offset="1" stop-color="#a6c2f6"/></linearGradient></defs><rect x="0.5" y="0.5" width="5" height="5.5" fill="url(#s3)" stroke="#6c90e8" stroke-width="1"/><rect x="0.5" y="8.5" width="5" height="5.5" fill="url(#s3)" stroke="#6c90e8" stroke-width="1"/><rect x="7.5" y="0.5" width="5" height="5.5" fill="url(#s3)" stroke="#6c90e8" stroke-width="1"/><rect x="7.5" y="8.5" width="5" height="5.5" fill="url(#s3)" stroke="#6c90e8" stroke-width="1"/></svg>
<svg style="left:747px;top:441px" width="17" height="12" viewBox="0 0 17 12"><defs><linearGradient id="s4" x1="0" y1="0" x2="1" y2="1"><stop offset="0.2" stop-color="#f6f9ff"/><stop offset="1" stop-color="#a6c2f6"/></linearGradient></defs><rect x="0.5" y="0.5" width="7" height="10.5" fill="url(#s4)" stroke="#7c9cec" stroke-width="1"/><rect x="9.5" y="0.5" width="7" height="10.5" fill="url(#s4)" stroke="#7c9cec" stroke-width="1"/></svg>
<!-- STATUS BAR -->
<div class="a" style="left:0;top:480px;width:777px;height:3px;background:#545454;border-top:1px solid #96948f"></div>
<div class="a" style="left:2px;top:461px;width:500px;height:18px;border:1px solid;border-color:#808080 #fff #fff #808080"></div>
<div class="a" style="left:504px;top:461px;width:22px;height:18px;border:1px solid;border-color:#808080 #fff #fff #808080"></div>
<div class="a" style="left:528px;top:461px;width:22px;height:18px;border:1px solid;border-color:#808080 #fff #fff #808080"></div>
<div class="a" style="left:552px;top:461px;width:22px;height:18px;border:1px solid;border-color:#808080 #fff #fff #808080"></div>
<div class="a" style="left:576px;top:461px;width:22px;height:18px;border:1px solid;border-color:#808080 #fff #fff #808080"></div>
<div class="a" style="left:600px;top:461px;width:22px;height:18px;border:1px solid;border-color:#808080 #fff #fff #808080"></div>
<div class="a" style="left:624px;top:461px;width:151px;height:18px;border:1px solid;border-color:#808080 #fff #fff #808080"></div>
<svg style="left:4px;top:462px" width="16" height="16" viewBox="0 0 16 16"><path d="M3.5 0.6 H12 L15.3 3.9 V14.8 H3.5Z" fill="#cfdcf8" stroke="#9cb4ec" stroke-width="0.8"/><path d="M15.5 4.4V15H4.4" fill="none" stroke="#7474b4" stroke-width="0.9"/><path d="M12 0.6V3.9H15.3Z" fill="#fff" stroke="#9cb4ec" stroke-width="0.6"/><path d="M9.9 9.4 H2.6 C2.8 6.6 4.4 5.4 6.2 5.4 C8.2 5.4 9.8 6.8 9.9 9.4 M9.6 11.2 C8.8 12.8 7.6 13.4 6.2 13.4 C4 13.4 2.4 11.8 2.5 9.4" fill="none" stroke="#2a84e6" stroke-width="1.9"/><path d="M0.6 12.6 C-0.2 10 3 4.4 8 2.6 C10 2 11.4 2.4 11 4" fill="none" stroke="#58a8f4" stroke-width="1"/></svg>
<div class="t11" style="left:23px;top:464px;font-size:11px;letter-spacing:-0.1px;-webkit-text-stroke:0.2px #000">Done</div>
<svg style="left:626px;top:462px" width="17" height="16" viewBox="0 0 17 16"><defs><linearGradient id="mo" x1="0" y1="0" x2="1" y2="1"><stop offset="0" stop-color="#b0e6ff"/><stop offset="1" stop-color="#4aa8f0"/></linearGradient></defs><rect x="6" y="0.8" width="9.6" height="9.2" rx="1" fill="url(#mo)" stroke="#b4d4f8" stroke-width="0.8"/><path d="M15.9 2.4V10.2" stroke="#7878c8" stroke-width="0.9"/><path d="M8.5 10.2 H12.8 L13.6 12.2 H7.6Z" fill="#c4bcec"/><ellipse cx="10.4" cy="13.5" rx="5" ry="2.2" fill="#8878c8"/><ellipse cx="10.2" cy="13.1" rx="4.7" ry="1.8" fill="#e6e4fa"/><circle cx="3.2" cy="5" r="3.7" fill="#2a58b8"/><path d="M1 2.4 C2.4 2.2 4 4.4 5.2 6.8" fill="none" stroke="#38c438" stroke-width="1.7"/></svg>
<div class="t11" style="left:645px;top:464px;font-size:11px;letter-spacing:-0.2px;-webkit-text-stroke:0.2px #000">Unknown Zone</div>
<svg style="left:761px;top:465px" width="13" height="13" viewBox="0 0 13 13"><path d="M12.5 1 L1 12.5 M12.5 5 L5 12.5 M12.5 9 L9 12.5" stroke="#808080" stroke-width="1.6"/><path d="M12.5 0 L0 12.5 M12.5 4 L4 12.5 M12.5 8 L8 12.5" stroke="#fff" stroke-width="0.9"/></svg>

</body></html>
